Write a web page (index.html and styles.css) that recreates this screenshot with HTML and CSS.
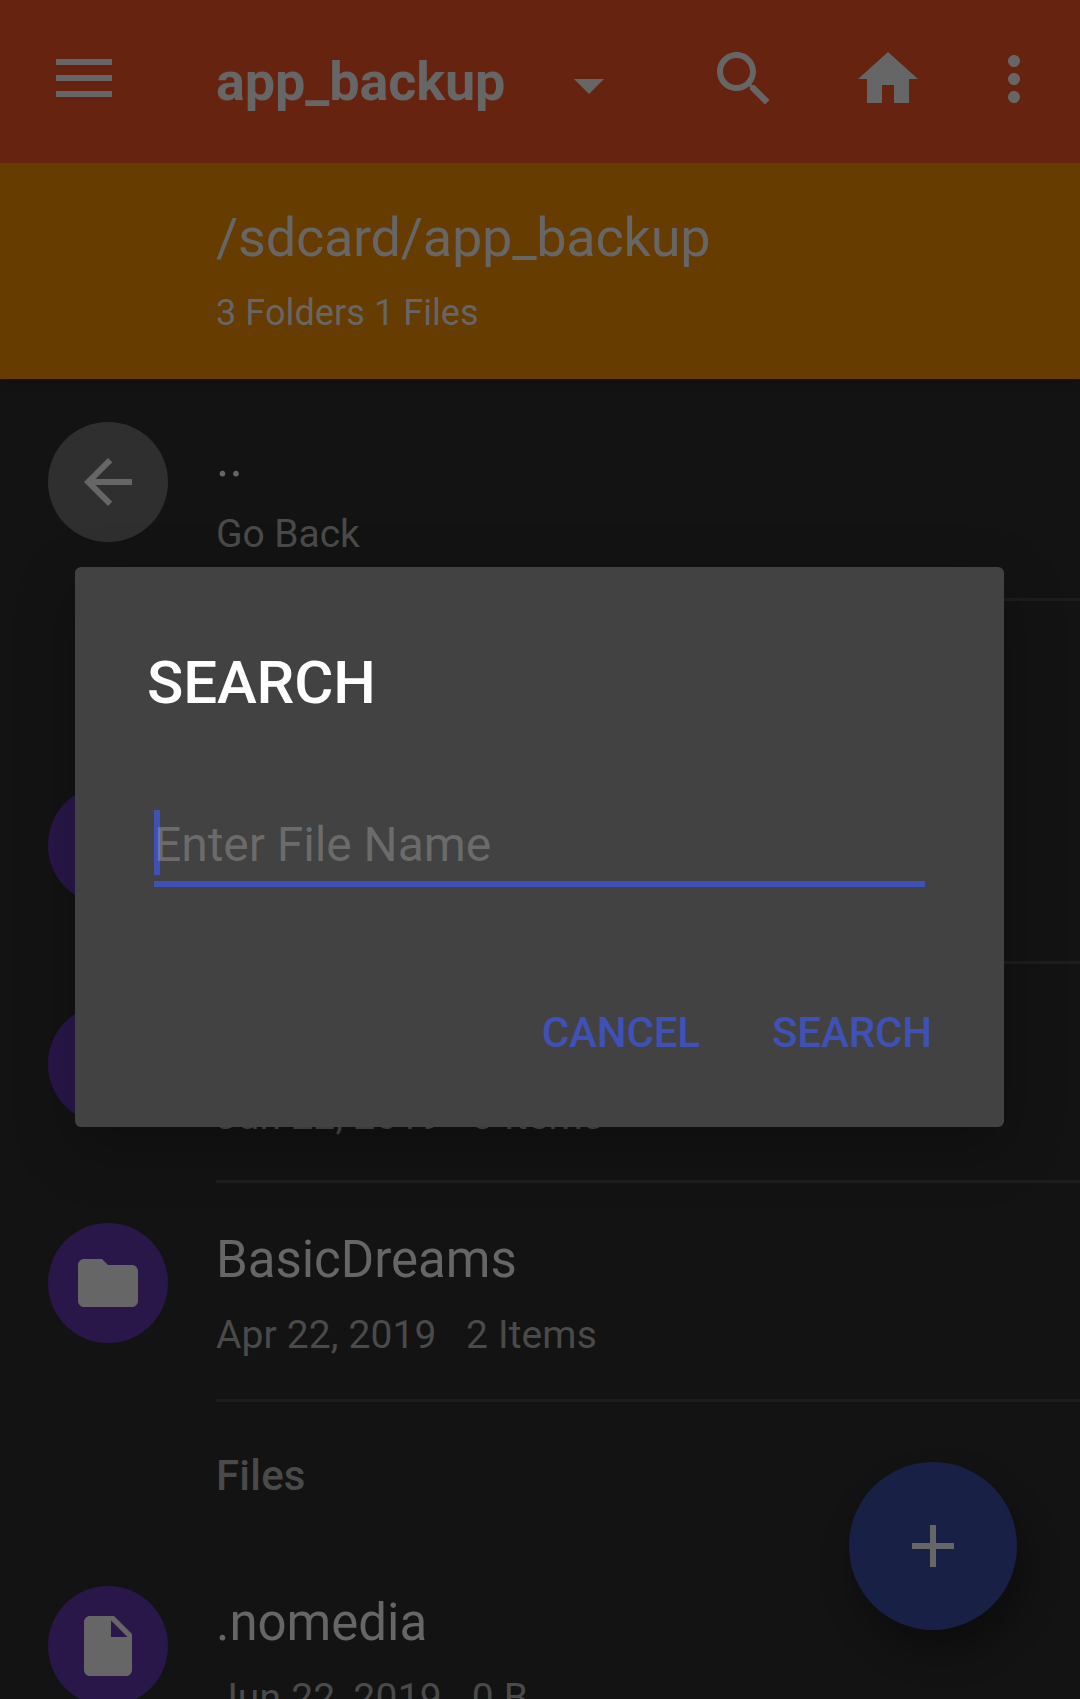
FILE: index.html
```html
<!DOCTYPE html>
<html lang="en">
<head>
<meta charset="utf-8">
<title>app_backup</title>
<link rel="stylesheet" href="styles.css">
</head>
<body>
<div class="screen">
  <header class="header">
    <div class="toolbar">
      <svg class="menu-icon" viewBox="0 0 56 38"><path d="M0 0h56v6H0zM0 16h56v6H0zM0 32h56v6H0z"/></svg>
      <h1 class="title">app_backup</h1>
      <svg class="icon dropdown" viewBox="0 0 24 24"><path d="M7 10l5 5 5-5z"/></svg>
      <svg class="icon search" viewBox="0 0 24 24"><path d="M15.5 14h-.79l-.28-.27C15.41 12.59 16 11.11 16 9.5 16 5.91 13.09 3 9.5 3S3 5.91 3 9.5 5.91 16 9.5 16c1.61 0 3.09-.59 4.23-1.57l.27.28v.79l5 4.99L20.49 19l-4.99-5zm-6 0C7.01 14 5 11.99 5 9.5S7.01 5 9.5 5 14 7.01 14 9.5 11.99 14 9.5 14z"/></svg>
      <svg class="icon home" viewBox="0 0 24 24"><path d="M10 20v-6h4v6h5v-8h3L12 3 2 12h3v8z"/></svg>
      <svg class="icon more" viewBox="0 0 24 24"><path d="M12 8c1.100 0 2-.9 2-2s-.9-2-2-2-2 .9-2 2 .9 2 2 2zm0 2c-1.100 0-2 .9-2 2s.9 2 2 2 2-.9 2-2-.9-2-2-2zm0 6c-1.100 0-2 .9-2 2s.9 2 2 2 2-.9 2-2-.9-2-2-2z"/></svg>
    </div>
    <div class="pathbar">
      <div class="path">/sdcard/app_backup</div>
      <div class="counts">3 Folders 1 Files</div>
    </div>
  </header>

  <main class="list">
    <div class="row">
      <div class="avatar back"><svg class="icon" viewBox="0 0 24 24"><path d="M20 11H7.830l5.590-5.590L12 4l-8 8 8 8 1.410-1.410L7.830 13H20v-2z"/></svg></div>
      <div class="info"><div class="name">..</div><div class="meta back-label">Go Back</div></div>
    </div>
    <div class="section"></div>
    <div class="row">
      <div class="avatar"></div>
      <div class="info"></div>
    </div>
    <div class="row">
      <div class="avatar"></div>
      <div class="info"><div class="name"></div><div class="meta june">Jun 22, 2019   3 Items</div></div>
    </div>
    <div class="row">
      <div class="avatar"><svg class="icon" viewBox="0 0 24 24"><path d="M10 4H4c-1.100 0-1.990.9-1.990 2L2 18c0 1.100.9 2 2 2h16c1.100 0 2-.9 2-2V8c0-1.100-.9-2-2-2h-8l-2-2z"/></svg></div>
      <div class="info"><div class="name">BasicDreams</div><div class="meta">Apr 22, 2019   2 Items</div></div>
    </div>
    <div class="section">Files</div>
    <div class="row">
      <div class="avatar"><svg class="icon" viewBox="0 0 24 24"><path d="M6 2c-1.100 0-1.990.9-1.990 2L4 20c0 1.100.89 2 1.990 2H18c1.100 0 2-.9 2-2V8l-6-6H6zm7 7V3.500L18.500 9H13z"/></svg></div>
      <div class="info"><div class="name">.nomedia</div><div class="meta june">Jun 22, 2019   0 B</div></div>
    </div>
  </main>

  <div class="fab"><svg class="icon" viewBox="0 0 24 24"><path d="M19 13h-6v6h-2v-6H5v-2h6V5h2v6h6v2z"/></svg></div>

  <div class="dialog" role="dialog">
    <h2 class="dialog-title">SEARCH</h2>
    <div class="field"><span class="caret"></span><span class="hint">Enter File Name</span></div>
    <div class="actions"><span>CANCEL</span><span>SEARCH</span></div>
  </div>
</div>
</body>
</html>
```
FILE: styles.css
```css
* { box-sizing: border-box; }
body { margin: 0; background: #131313; font-family: Roboto, "Liberation Sans", sans-serif; color: #666; }
.screen { position: relative; width: 1080px; height: 1699px; overflow: hidden; background: #131313; }
h1, h2 { margin: 0; }
svg { display: block; flex: none; fill: #666; }
.icon { width: 72px; height: 72px; }

.header { position: relative; box-shadow: 0 3px 10px rgba(0, 0, 0, .25); }
.toolbar { display: flex; align-items: flex-start; height: 163px; padding: 43px 30px 0 56px; background: #66230f; }
.menu-icon { width: 56px; height: 38px; margin-top: 16px; }
.title { width: 337px; margin: 7px 0 0 104px; font-size: 54px; line-height: 63px; font-weight: 700; letter-spacing: -.12px; }
.dropdown { margin-top: 6px; }
.search { margin-left: 83px; }
.home { margin-left: 72px; }
.more { margin-left: 54px; }
.pathbar { height: 216px; padding: 43px 0 0 216px; background: #663c00; }
.path { font-size: 54px; line-height: 63px; letter-spacing: -.24px; }
.counts { margin-top: 23px; font-size: 36px; line-height: 42px; letter-spacing: .08px; }

.list { padding-top: 3px; }
.row { display: flex; gap: 48px; height: 219px; padding-left: 48px; }
.avatar { display: flex; flex: none; align-items: center; justify-content: center; width: 120px; height: 120px; margin-top: 40px; border-radius: 50%; background: #291749; }
.back { background: #2f2f2f; }
.info { flex: 1; padding-top: 47px; border-bottom: 3px solid #1d1d1d; }
.name { height: 60px; font-size: 51px; line-height: 59px; letter-spacing: -.03px; }
.meta { margin-top: 22px; font-size: 39px; line-height: 46px; color: #4a4a4a; letter-spacing: .13px; white-space: pre; }
.meta.june { letter-spacing: .24px; }
.meta.back-label { letter-spacing: -.05px; }
.section { height: 144px; padding: 49px 0 0 216px; font-size: 42px; line-height: 49px; font-weight: 500; letter-spacing: .2px; color: #4a4a4a; }

.fab { position: absolute; left: 849px; top: 1462px; display: flex; align-items: center; justify-content: center; width: 168px; height: 168px; border-radius: 50%; background: #192046; box-shadow: 8px 22px 36px rgba(0, 0, 0, .32); }

.dialog { position: absolute; left: 75px; top: 567px; width: 929px; height: 560px; padding: 80px 72px 0; border-radius: 6px; background: #424242; box-shadow: 0 20px 60px rgba(0, 0, 0, .25); }
.dialog-title { font-size: 60px; line-height: 71px; font-weight: 500; letter-spacing: -.15px; color: #fff; }
.field { position: relative; width: 771px; height: 77px; margin: 92px 0 0 7px; padding-top: 6px; border-bottom: 6px solid #3f51b5; font-size: 48px; line-height: 57px; letter-spacing: -.07px; }
.caret { position: absolute; left: 0; top: 0; width: 6px; height: 65px; background: #3f51b5; }
.hint { position: relative; color: rgba(255, 255, 255, .22); }
.actions { display: flex; justify-content: flex-end; gap: 72px; margin-top: 121px; font-size: 42px; line-height: 49px; font-weight: 500; letter-spacing: -.1px; color: #3f51b5; }
```
